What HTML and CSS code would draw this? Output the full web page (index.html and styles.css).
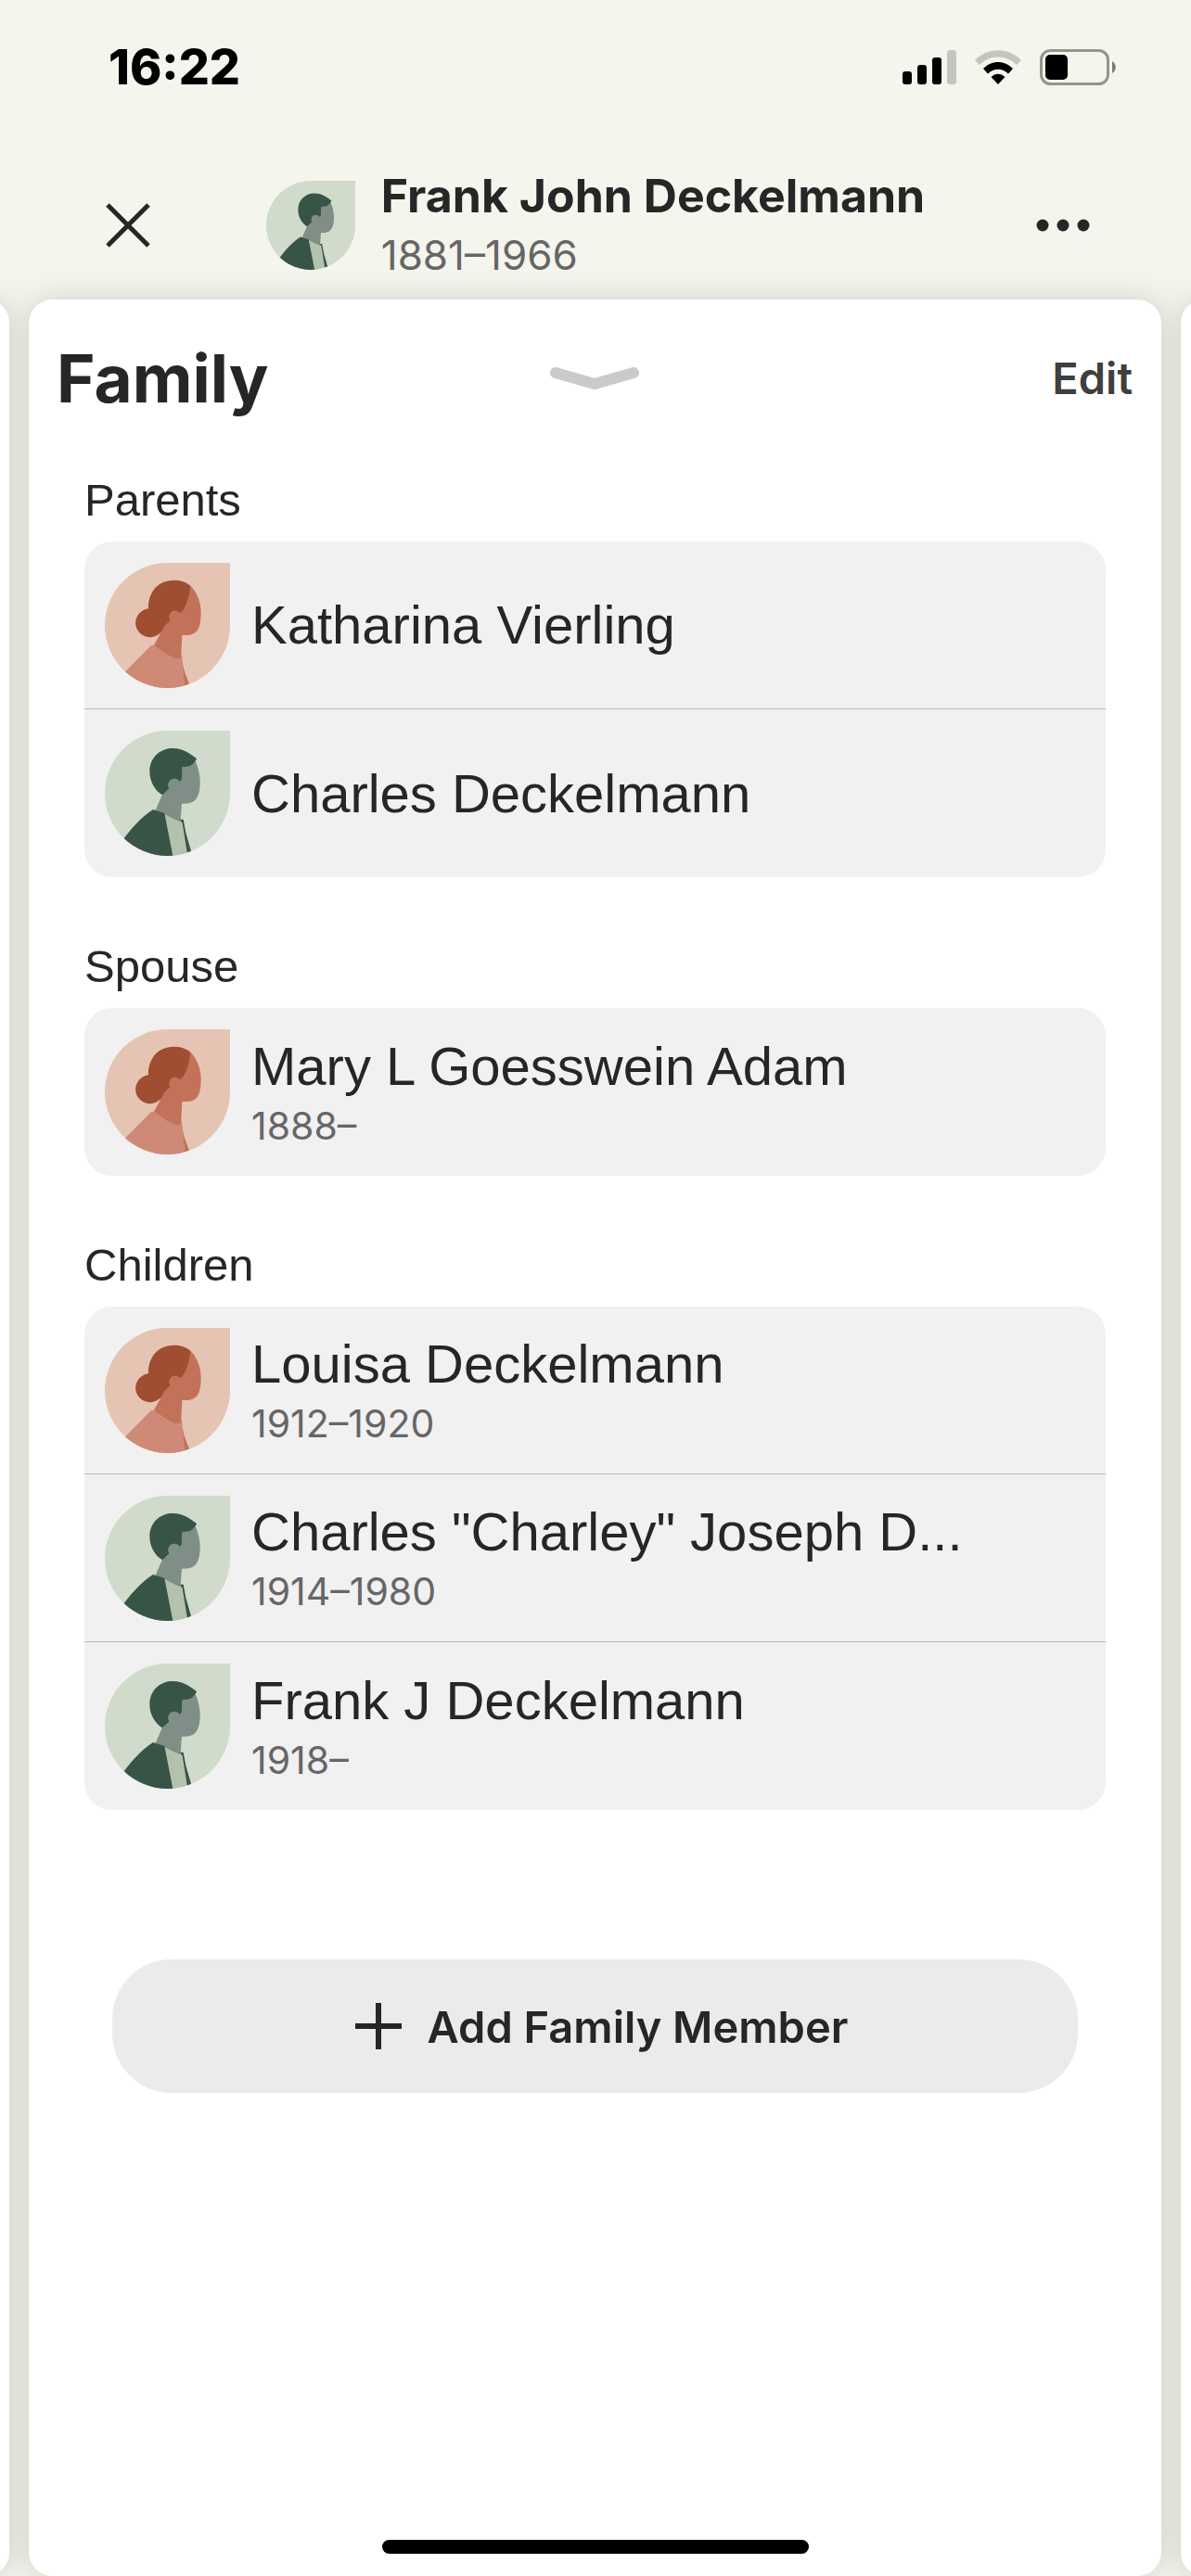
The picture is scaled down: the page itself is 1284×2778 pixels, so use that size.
FILE: index.html
```html
<!DOCTYPE html>
<html lang="en">

<head>
    <meta charset="UTF-8">
    <meta name="viewport" content="width=device-width, initial-scale=1.0">
    <title>Family - Frank John Deckelmann</title>
    <link rel="stylesheet" href="styles.css">
</head>

<body>

    <!-- Avatar drawings, reused by every row -->
    <svg class="sprite" aria-hidden="true">
        <defs>
            <clipPath id="leaf">
                <path d="M405 0V202.500A202.500 202.500 0 1 1 202.500 0Z" />
            </clipPath>
        </defs>
        <symbol id="avatar-female" viewBox="0 0 405 405">
            <g clip-path="url(#leaf)">
                <path fill="#e6c4b4" d="M0 0H405V405H0Z" />
                <path fill="#c3725a" d="M277 74C296 92 311 125 311 162C311 195 305 212 297 221C287 232 272 235 250 234L246 315L200 320L157 269L178 232L190 206L200 120Z" />
                <path fill="#a04e31" d="M277 74C262 61 245 56 223 56C170 56 139 98 141 148A46.500 46.500 0 1 0 173 232C184 225 190 213 191 206L212 186A19 19 0 1 1 242 162C248 162 252 154 257 147C269 125 274 100 277 74Z" />
                <path fill="#ce8a77" d="M50 368L149 268C153 265 157 266 161 268C185 285 208 303 230 309C238 310 244 308 246 306L246 297H249L253 335L259 410H50Z" />
                <path fill="#c3725a" d="M251 324L258 352L276 400L259 410Z" />
            </g>
        </symbol>
        <symbol id="avatar-male" viewBox="0 0 405 405">
            <g clip-path="url(#leaf)">
                <path fill="#d0dbcb" d="M0 0H405V405H0Z" />
                <path fill="#7f8f87" d="M293 98C302 119 308 142 308 167C308 192 303 211 295 221C286 233 272 236 249 236L244 300L193 275L164 257L186 206L210 130Z" />
                <path fill="#375447" d="M219 57C251 56 279 75 297 91C296 96 291 99 289 103C280 116 265 117 250 117C248 125 250 138 249 151C248 160 246 164 242 164A19 19 0 1 0 208 187L186 208C162 193 145 165 145 131C145 89 177 57 219 57Z" />
                <path fill="#b4c1ad" d="M193 269C212 281 233 289 253 298L270 410H215Z" />
                <path fill="#375447" d="M50 365C80 322 118 279 156 255L193 267L221 410H50Z" />
                <path fill="#375447" d="M242 287H254L262 330L282 400L268 404L251 299Z" />
            </g>
        </symbol>
    </svg>

    <div class="status-bar">
        <span class="time">16:22</span>
        <div class="status-icons">
            <svg width="58" height="38" viewBox="0 0 58 38">
                <rect x="0" y="23" width="10" height="14" rx="3" />
                <rect x="16" y="16" width="10" height="21" rx="3" />
                <rect x="32" y="8" width="10" height="29" rx="3" />
                <rect x="48" y="0" width="10" height="37" rx="3" fill="#c4c5be" />
            </svg>
            <svg width="50" height="38" viewBox="0 0 50 38">
                <path fill="#c4c5be" d="M0 11C14 -3.500 36 -3.500 50 11L45 16C34 4.500 16 4.500 5 16Z" />
                <path d="M9 20C18 10.500 32 10.500 41 20L36 25.500C30 19 20 19 14 25.500Z" />
                <path d="M17.500 29C22 24.500 28 24.500 32.500 29L25 37Z" />
            </svg>
            <svg width="82" height="40" viewBox="0 0 82 40">
                <rect x="1.500" y="1.500" width="72" height="36" rx="10" fill="none" stroke="#94958f" stroke-width="3" />
                <rect x="6" y="6" width="24" height="27" rx="5" />
                <path fill="#7c7d77" d="M78 13C83 16 83 23 78 26Z" />
            </svg>
        </div>
    </div>

    <header class="top-bar">
        <button class="icon-btn" aria-label="Close">
            <svg width="48" height="48" viewBox="0 0 48 48">
                <path d="M2 2L46 46M46 2L2 46" stroke="#262626" stroke-width="5" />
            </svg>
        </button>
        <div class="person">
            <svg class="person-avatar"><use href="#avatar-male" /></svg>
            <div>
                <h1>Frank John Deckelmann</h1>
                <p>1881–1966</p>
            </div>
        </div>
        <button class="icon-btn" aria-label="More options">
            <svg width="58" height="14" viewBox="0 0 58 14" fill="#262626">
                <circle cx="7" cy="7" r="6.500" />
                <circle cx="29" cy="7" r="6.500" />
                <circle cx="51" cy="7" r="6.500" />
            </svg>
        </button>
    </header>

    <div class="pager">
        <div class="peek"></div>

        <main class="sheet">
            <div class="sheet-header">
                <h2>Family</h2>
                <svg width="96" height="26" viewBox="0 0 96 26">
                    <path d="M6 7L48 19L90 7" fill="none" stroke="#cacaca" stroke-width="12" stroke-linecap="round" />
                </svg>
                <button class="edit-btn">Edit</button>
            </div>

            <section class="group">
                <h3>Parents</h3>
                <ul class="list">
                    <li>
                        <svg class="avatar"><use href="#avatar-female" /></svg>
                        <div>
                            <p class="name">Katharina Vierling</p>
                        </div>
                    </li>
                    <li>
                        <svg class="avatar"><use href="#avatar-male" /></svg>
                        <div>
                            <p class="name">Charles Deckelmann</p>
                        </div>
                    </li>
                </ul>
            </section>

            <section class="group">
                <h3>Spouse</h3>
                <ul class="list">
                    <li>
                        <svg class="avatar"><use href="#avatar-female" /></svg>
                        <div>
                            <p class="name">Mary L Goesswein Adam</p>
                            <p class="years">1888–</p>
                        </div>
                    </li>
                </ul>
            </section>

            <section class="group">
                <h3>Children</h3>
                <ul class="list">
                    <li>
                        <svg class="avatar"><use href="#avatar-female" /></svg>
                        <div>
                            <p class="name">Louisa Deckelmann</p>
                            <p class="years">1912–1920</p>
                        </div>
                    </li>
                    <li>
                        <svg class="avatar"><use href="#avatar-male" /></svg>
                        <div>
                            <p class="name">Charles "Charley" Joseph D...</p>
                            <p class="years">1914–1980</p>
                        </div>
                    </li>
                    <li>
                        <svg class="avatar"><use href="#avatar-male" /></svg>
                        <div>
                            <p class="name">Frank J Deckelmann</p>
                            <p class="years">1918–</p>
                        </div>
                    </li>
                </ul>
            </section>

            <button class="add-btn">
                <svg width="50" height="50" viewBox="0 0 50 50">
                    <path d="M25 0V50M0 25H50" stroke="#262626" stroke-width="6" />
                </svg>
                Add Family Member
            </button>

            <div class="home-indicator"></div>
        </main>

        <div class="peek"></div>
    </div>

</body>

</html>
```
FILE: styles.css
```css
* {
    box-sizing: border-box;
}

body {
    font-family: Inter, "Liberation Sans", Arial, sans-serif;
    background: #f4f5ec;
    color: #262626;
    margin: 0;
    min-height: 100vh;
    display: flex;
    flex-direction: column;
    overflow-x: hidden;
}

h1,
h2,
h3,
p,
ul {
    margin: 0;
    padding: 0;
}

svg {
    display: block;
    flex-shrink: 0;
}

button {
    font-family: inherit;
    color: inherit;
    background: none;
    border: none;
    padding: 0;
    cursor: pointer;
}

.sprite {
    position: absolute;
    width: 0;
    height: 0;
}

/* Status bar */
.status-bar {
    height: 145px;
    padding: 0 81px 0 117px;
    display: flex;
    justify-content: space-between;
    align-items: center;
    color: #000;
}

.time {
    font-size: 52px;
    font-weight: 800;
}

.status-icons {
    display: flex;
    align-items: center;
    gap: 20px;
}

/* Top bar */
.top-bar {
    display: flex;
    justify-content: space-between;
    align-items: center;
    padding: 34px 114px 16px;
}

.icon-btn {
    width: 48px;
    height: 48px;
    display: flex;
    justify-content: center;
    align-items: center;
}

.person {
    display: flex;
    align-items: center;
    gap: 28px;
}

.person-avatar {
    width: 96px;
    height: 96px;
}

.person h1 {
    font-size: 50px;
    line-height: 64px;
    font-weight: 650;
}

.person p {
    font-size: 44px;
    line-height: 64px;
    color: #666;
}

/* Sheets */
.pager {
    flex: 1;
    display: flex;
    gap: 21px;
    margin: 0 -39px 0 -40px;
    filter: drop-shadow(0 0 16px rgba(0, 0, 0, 0.15));
}

.sheet,
.peek {
    background: #fff;
    border-radius: 26px;
}

.sheet {
    flex: 1;
    display: flex;
    flex-direction: column;
    padding-bottom: 24px;
}

/* the neighbouring sheets run off both edges */
.peek {
    width: 50px;
}

.sheet-header {
    height: 170px;
    margin-bottom: 18px;
    padding: 0 31px 0 30px;
    display: grid;
    grid-template-columns: 1fr auto 1fr;
    align-items: center;
}

.sheet-header h2 {
    font-size: 71px;
    line-height: 80px;
    font-weight: 650;
}

.edit-btn {
    justify-self: end;
    color: #3f3f3f;
    font-size: 47px;
    line-height: 56px;
    font-weight: 600;
}

.group {
    margin: 0 60px 68px;
}

.group h3 {
    font-family: "Liberation Sans", Arial, sans-serif;
    font-size: 49px;
    line-height: 56px;
    font-weight: 400;
    margin-bottom: 17px;
}

.list {
    list-style: none;
    background: #f1f1f1;
    border-radius: 30px;
}

.list li {
    height: 181px;
    padding: 0 22px;
    display: flex;
    align-items: center;
    gap: 23px;
}

.list li:not(:last-child) {
    border-bottom: 1px solid #b8b8b8;
}

.avatar {
    width: 135px;
    height: 135px;
}

.name {
    font-family: "Liberation Sans", Arial, sans-serif;
    font-size: 58px;
    line-height: 72px;
}

.years {
    font-size: 41px;
    line-height: 56px;
    color: #666;
}

.add-btn {
    height: 144px;
    margin: 93px 90px 0;
    padding-left: 14px;
    background: #ebebeb;
    border-radius: 64px;
    display: flex;
    justify-content: center;
    align-items: center;
    gap: 28px;
    font-size: 47px;
    font-weight: 600;
}

.home-indicator {
    width: 460px;
    height: 15px;
    margin: auto auto 0;
    border-radius: 8px;
    background: #000;
}
```
